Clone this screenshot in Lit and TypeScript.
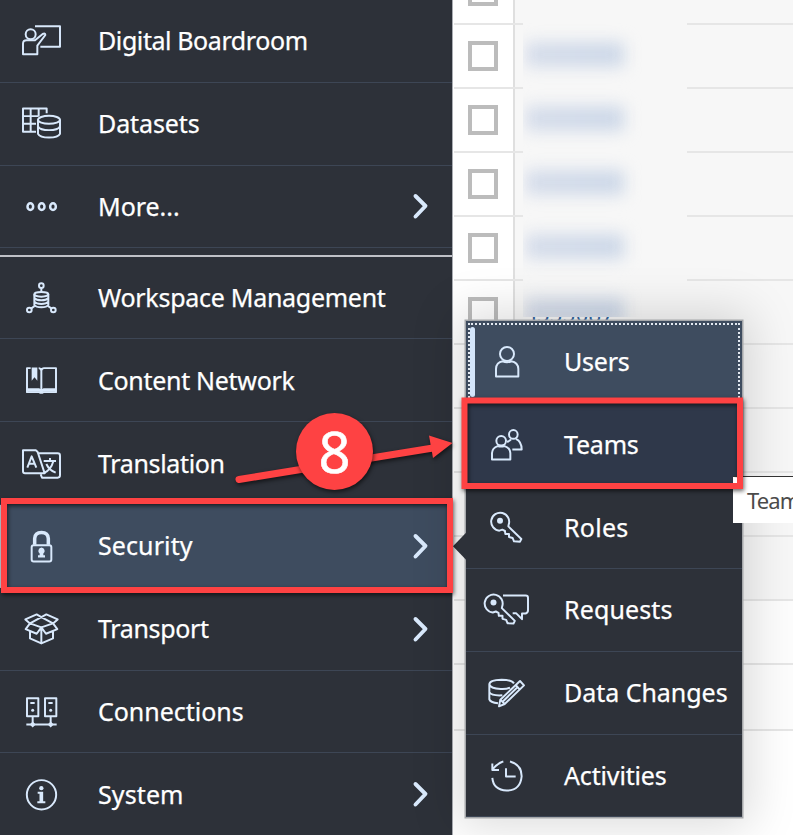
import { LitElement, html, svg, css, nothing, TemplateResult, SVGTemplateResult } from "lit";
import { customElement, property } from "lit/decorators.js";
import { classMap } from "lit/directives/class-map.js";

interface Item {
  label: string;
  width: number;
  view: string;
  icon: SVGTemplateResult;
  arrow?: boolean;
  state?: string;
}

const FONT = '"Noto Sans", "Open Sans", sans-serif';
const pen = document.createElement("canvas").getContext("2d")!;

/* Tracking that makes a label as wide as its design width. */
function tracking(label: string, width: number): number {
  pen.font = `400 25px ${FONT}`;
  return (width + 0.6 - pen.measureText(label).width) / label.length;
}

const key = svg`
  <path d="M176 103 A27 27 0 1 0 148 121 L157 118 L165 122 L166 131 L177 131 L177 140 L188 143 L192 153 L210 154 L214 146 L175 108 Z"/>
  <circle class="fill" cx="150" cy="91" r="9"/>`;

const first: Item[] = [
  {
    label: "Digital Boardroom", width: 209, view: "48 64 150 120",
    icon: svg`<circle cx="92" cy="104" r="15"/>
      <path d="M105 80 H180 V141 H121"/>
      <path d="M69 164 V132 Q69 122 80 122 H105 L128 103 Q136 99 136 106 L112 138 V164 Z"/>`,
  },
  {
    label: "Datasets", width: 101, view: "48 312.6 150 120",
    icon: svg`<path d="M108 396 H69 V326 H140 V340 M69 349 H116 M69 372 H108 M92 326 V396 M116 326 V349"/>
      <ellipse cx="147" cy="360" rx="33" ry="12"/>
      <path d="M114 360 V402 Q119 413 147 413 Q175 413 180 402 V360 M114 380 Q120 391 147 391 Q174 391 180 380"/>`,
  },
  {
    label: "More...", width: 81, view: "48 561 150 120", arrow: true,
    icon: svg`<ellipse class="bold" cx="91" cy="620" rx="8.500" ry="10"/><ellipse class="bold" cx="125" cy="620" rx="8.500" ry="10"/><ellipse class="bold" cx="159" cy="620" rx="8.500" ry="10"/>`,
  },
];

const second: Item[] = [
  {
    label: "Workspace Management", width: 287, view: "48 82 150 120",
    icon: svg`<circle cx="124" cy="105" r="7"/><circle cx="88" cy="178" r="7"/><circle cx="160" cy="178" r="7"/>
      <path d="M124 112 V124 M94 173 L104 166 M154 173 L144 166"/>
      <ellipse cx="124" cy="131" rx="21" ry="7"/>
      <path d="M103 131 V163 Q108 170 124 170 Q140 170 145 163 V131 M103 142 Q109 149 124 149 Q139 149 145 142 M103 153 Q109 160 124 160 Q139 160 145 153"/>`,
  },
  {
    label: "Content Network", width: 196, view: "48 330.6 150 120",
    icon: svg`<path d="M92 352 H81 V424 H118 Q124 428 130 424 H168 V352 H132 Q126 352 124 359 Q122 352 116 352 M124 359 V418 M81 415 H116 L124 420 L132 415 H168"/>
      <path class="fill" d="M95 350 H112 V390 L103.500 379 L95 390 Z"/><path class="fill" d="M82 415 H116 L124 420 L132 415 H167 V423 H82 Z"/>`,
  },
  {
    label: "Translation", width: 126, view: "48 579 150 120",
    icon: svg`<path d="M69 598 H108 L113 603 L134 667 H75 Q69 667 69 661 Z M116 607 H173 Q180 607 180 614 V673 Q180 680 173 680 H126 L122 670"/>
      <path d="M82 650 L95 616 L109 650 M87 638 H104"/>
      <path d="M131 630 H168 M150 621 V630 M160 631 Q153 656 134 665 M139 639 Q148 658 167 665"/>`,
  },
  {
    label: "Security", width: 94, view: "48 107.4 150 120", arrow: true, state: "active",
    icon: svg`<rect x="95" y="165" width="59" height="49" rx="6"/>
      <path class="heavy" d="M104 164 V145 Q105 127 124.500 127 Q144 127 145 145 V164"/>
      <path class="fill" d="M124.500 172 A10 10 0 0 1 130 190 V195 H135 V202 H114 V195 H119 V190 A10 10 0 0 1 124.500 172Z"/>`,
  },
  {
    label: "Transport", width: 110, view: "48 355.8 150 120", arrow: true,
    icon: svg`<path d="M124 380 L139 372 L173 387 L159 399 L172 416 L138 430 L124 411 L110 430 L77 416 L90 399 L76 387 L110 372 Z M124 380 L159 399 L124 411 L90 399 Z M90 424 V444 L124 459 L159 444 V424 M124 413 V458"/>`,
  },
  {
    label: "Connections", width: 145, view: "48 604.2 150 120",
    icon: svg`<path d="M81 623 H115 V677 H81 Z M135 623 H169 V677 H135 Z M91 637 H104 M145 637 H158 M79 702 H170 M98 677 V700 M152 677 V700"/>
      <circle class="fill" cx="98" cy="659" r="4.500"/><circle class="fill" cx="152" cy="659" r="4.500"/>
      <path class="fill" d="M89 702 L98 693 L107 702 L98 711Z M143 702 L152 693 L161 702 L152 711Z"/>`,
  },
  {
    label: "System", width: 85, view: "48 852.6 150 120", arrow: true,
    icon: svg`<circle cx="124.500" cy="912" r="44"/><circle class="fill" cx="124" cy="892" r="6.500"/>
      <path class="fill" d="M113 903 H129.500 V931 H136 V937.500 H112 V931 H118.500 V909 H113 Z"/>`,
  },
];

const flyout: Item[] = [
  {
    label: "Users", width: 65, view: "96 126.3 150 120", state: "focus",
    icon: svg`<circle cx="171" cy="162" r="21"/><path d="M138 230 V207 Q139 187 158 184 Q171 190 184 184 Q204 187 205 207 V230 Z"/>`,
  },
  {
    label: "Teams", width: 74, view: "96 374.7 150 120", state: "hover",
    icon: svg`<circle cx="153.500" cy="422" r="14.500"/><path d="M126 478 V459 Q127 443 143 438 Q153 441 164 438 Q180 443 181 459 V478 Z"/>
      <circle cx="190" cy="403" r="13"/><path d="M183 418 Q178 424 171 425 M198 416 Q215 424 215 448 H187"/>`,
  },
  { label: "Roles", width: 64, view: "96 53 150 120", icon: key },
  {
    label: "Requests", width: 108, view: "96 301.5 150 120",
    icon: svg`<g transform="translate(-19.500 248)">${key}</g>
      <path d="M159 318 H227 Q234 318 234 325 V362 Q234 369 227 372 H216 V389 L198 371 H188"/>`,
  },
  {
    label: "Data Changes", width: 163, view: "96 550 150 120",
    icon: svg`<path d="M192 581 Q184 570 155 570 Q118 571 118 584 Q121 597 152 598 Q169 599 180 594 M118 584 V629 Q121 638 144 641 M118 608 Q125 619 157 617"/>
      <path d="M151 630 L210 574 L222 587 L164 643 L147 650 Z M197 586 L209 599 M157 637 L203 592 M151 630 L164 643"/>`,
  },
  {
    label: "Activities", width: 102, view: "96 798.3 150 120",
    icon: svg`<path d="M180 815 Q215 824 215 859 Q211 902 170 902 Q130 900 127 864 M160 815 Q144 819 129 837 M127 821 V840 H147 M168 835 V860 H197"/>`,
  },
];

@customElement("menu-row")
export class MenuRow extends LitElement {
  @property({ attribute: false }) item!: Item;

  static styles = css`
    :host { display: block; }
    .row { height: 82.8px; box-sizing: border-box; border-bottom: 1.800px solid #3d4655; display: flex; align-items: center; padding-left: 16px; position: relative; }
    .icon { width: 50px; height: 40px; flex: none; margin-top: 1px; fill: none; stroke: #d9e9fc; stroke-width: 5.900; stroke-linejoin: round; }
    .icon .fill { fill: #d9e9fc; stroke: none; }
    .icon .bold { stroke-width: 7.500; }
    .icon .heavy { stroke-width: 10.500; }
    .label { flex: 1; margin-left: 32px; margin-top: -1px; font: 400 25px/34px "Noto Sans", "Open Sans", sans-serif; color: #fff; -webkit-text-stroke: 0.250px #fff; white-space: nowrap; }
    .arrow { width: 20px; height: 30px; margin-right: 22px; fill: none; stroke: #d9e9fc; stroke-width: 3.900; stroke-linecap: round; stroke-linejoin: round; }
    .active, .focus { background: #3e4c5f; }
    .active { border-left: 7px solid #c6cdd7; padding-left: 9px; }
    .hover { background: #2f384a; }
    .focus::before { content: ""; position: absolute; inset: 2px 2px 0; border: 2px dotted #e3e9f1; border-bottom: 0; }
    .focus::after { content: ""; position: absolute; left: 4px; top: 6px; width: 5px; height: 70px; border-radius: 3px; background: #d3e5fb; }
  `;

  render(): TemplateResult {
    const { label, width, view, icon, arrow, state } = this.item;
    return html`<div class=${classMap({ row: true, [state ?? "plain"]: true })}>
      <svg class="icon" viewBox=${view}>${icon}</svg>
      <span class="label" style="letter-spacing:${tracking(label, width)}px">${label}</span>
      ${arrow ? html`<svg class="arrow" viewBox="0 0 20 30"><path d="M5.500 5 L15.500 15 L5.500 25.500"/></svg>` : nothing}
    </div>`;
  }
}

@customElement("app-root")
export class AppRoot extends LitElement {
  static styles = css`
    :host { display: flex; position: relative; width: 793px; height: 835px; overflow: hidden; background: #fff; }
    .nav { width: 452px; flex: none; background: #2d3139; border-right: 1px solid #a9acb2; }
    .group { border-bottom: 2px solid #bfc1c7; height: 254.600px; }
    .table { flex: 1; display: flex; flex-direction: column; padding-left: 1px; }
    .line { height: 64px; flex: none; box-sizing: border-box; border-bottom: 2px solid #e6e6e6; display: flex; }
    .line.top { height: 25px; align-items: flex-end; }
    .line.last { height: 66px; }
    .pick { width: 61px; box-sizing: border-box; border-right: 2px solid #dfdfdf; flex: none; display: flex; align-items: center; padding-left: 14px; }
    .top .pick { height: 25px; align-items: flex-start; }
    .box { width: 30px; height: 30px; box-sizing: border-box; border: 4px solid #bcbcbc; background: #fff; }
    .top .box { margin-top: -22px; }
    .cell { flex: 1; background: #f7f7f7; }
    .top .cell { height: 25px; }
    .white .cell { background: #fdfdfd; }
    .tail { flex: 1; }
    .hidden { position: absolute; left: 523px; top: 0; width: 164px; height: 317px; background: #f7f7f7; overflow: hidden; display: flex; flex-direction: column; gap: 39px; padding-top: 42px; box-sizing: border-box; }
    .smudge { width: 98px; height: 25px; flex: none; margin-left: 3px; background: linear-gradient(90deg, #d5dcea, #cdd8e8 80%); filter: blur(8px); }
    .peek { position: absolute; left: 531px; top: 317px; width: 100px; height: 5px; overflow: hidden; font: 22px/30px "Noto Sans", sans-serif; color: #30659f; display: flex; align-items: flex-end; letter-spacing: 0.300px; }
    .peek span { margin-bottom: -6px; }
    .flyout { position: absolute; left: 466px; top: 320.700px; width: 276px; background: #2d3139; box-shadow: 0 0 0 1.500px #a5a7aa, 0 0 45px 8px rgba(0, 0, 0, 0.150); }
    .notch { position: absolute; left: -13px; top: 211px; width: 14px; height: 29px; background: #2d3139; clip-path: polygon(100% 0, 0 50%, 100% 100%); }
    .tip { position: absolute; left: 733px; top: 476px; width: 90px; height: 47px; box-sizing: border-box; background: #fff; border-top: 1px solid #333; padding-left: 14px; font: 22px/47px "Noto Sans", "Open Sans", sans-serif; letter-spacing: -0.900px; color: #4b4b4b; }
    .marks { position: absolute; left: 0; top: 0; width: 793px; height: 835px; }
    .frame { fill: none; stroke: #fe4243; stroke-width: 6; }
    .red { fill: #fe4243; }
    .shaft { stroke: #fe4243; stroke-width: 7; stroke-linecap: round; }
    .shade { filter: drop-shadow(1px 2px 2px rgba(0, 0, 0, 0.600)); }
    .step { font: 56px "Noto Sans", "Open Sans", sans-serif; fill: #fff; stroke: #fff; stroke-width: 0.600; text-anchor: middle; }
  `;

  render(): TemplateResult {
    const rows = Array.from({ length: 11 }, (_, i) => i);
    return html`
      <nav class="nav">
        <div class="group">${first.map((item) => html`<menu-row .item=${item}></menu-row>`)}</div>
        ${second.map((item) => html`<menu-row .item=${item}></menu-row>`)}
      </nav>
      <main class="table">
        <div class="line top"><div class="pick"><div class="box"></div></div><div class="cell"></div></div>
        ${rows.map((i) => html`<div class=${classMap({ line: true, white: i > 8, last: i === 10 })}>
          <div class="pick"><div class="box"></div></div><div class="cell"></div>
        </div>`)}
        <div class="tail"></div>
      </main>
      <div class="hidden">${[0, 1, 2, 3, 4].map(() => html`<div class="smudge"></div>`)}</div>
      <div class="peek"><span>j555087</span></div>
      <section class="flyout">
        <div class="notch"></div>
        ${flyout.map((item) => html`<menu-row .item=${item}></menu-row>`)}
      </section>
      <div class="tip">Teams</div>
      <svg class="marks" viewBox="0 0 793 835">
        <g class="shade">
          <rect class="frame" x="4" y="501" width="446" height="89"/>
          <rect class="frame" x="464.500" y="400.500" width="275.500" height="85.500"/>
        </g>
        <g class="shade">
          <path class="shaft" d="M239 479.500 L433 448"/>
          <path class="red" d="M452.500 443 L429 435.500 L433 458 Z"/>
        </g>
        <circle class="red shade" cx="334.500" cy="451.500" r="38.500"/>
        <rect x="733" y="478" width="4" height="5" fill="#fff"/>
        <text class="step" x="334.500" y="473">8</text>
      </svg>
    `;
  }
}
